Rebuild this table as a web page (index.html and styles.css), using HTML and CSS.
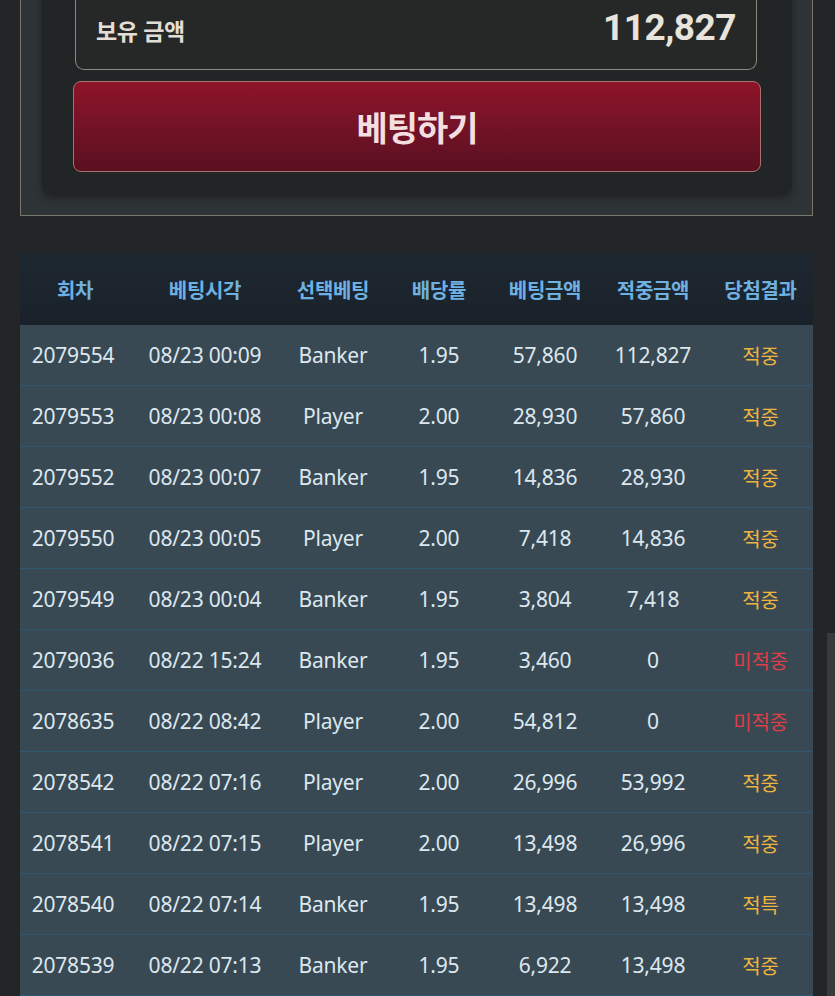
FILE: index.html
```html
<!DOCTYPE html>
<html lang="ko">
<head>
<meta charset="utf-8">
<link rel="stylesheet" href="styles.css">
</head>
<body>
<div class="page">
  <section class="panel">
    <div class="card">
      <div class="balance">
        <span class="balance-label">보유 금액</span>
        <span class="balance-value">112,827</span>
      </div>
      <button class="bet-btn">베팅하기</button>
    </div>
  </section>

  <table class="history">
    <colgroup>
      <col class="c1"><col class="c2"><col class="c3"><col class="c4"><col class="c5"><col class="c6"><col class="c7">
    </colgroup>
    <thead>
      <tr><th>회차</th><th>베팅시각</th><th>선택베팅</th><th>배당률</th><th>베팅금액</th><th>적중금액</th><th>당첨결과</th></tr>
    </thead>
    <tbody>
      <tr><td>2079554</td><td>08/23 00:09</td><td>Banker</td><td>1.95</td><td>57,860</td><td>112,827</td><td class="win">적중</td></tr>
      <tr><td>2079553</td><td>08/23 00:08</td><td>Player</td><td>2.00</td><td>28,930</td><td>57,860</td><td class="win">적중</td></tr>
      <tr><td>2079552</td><td>08/23 00:07</td><td>Banker</td><td>1.95</td><td>14,836</td><td>28,930</td><td class="win">적중</td></tr>
      <tr><td>2079550</td><td>08/23 00:05</td><td>Player</td><td>2.00</td><td>7,418</td><td>14,836</td><td class="win">적중</td></tr>
      <tr><td>2079549</td><td>08/23 00:04</td><td>Banker</td><td>1.95</td><td>3,804</td><td>7,418</td><td class="win">적중</td></tr>
      <tr><td>2079036</td><td>08/22 15:24</td><td>Banker</td><td>1.95</td><td>3,460</td><td>0</td><td class="lose">미적중</td></tr>
      <tr><td>2078635</td><td>08/22 08:42</td><td>Player</td><td>2.00</td><td>54,812</td><td>0</td><td class="lose">미적중</td></tr>
      <tr><td>2078542</td><td>08/22 07:16</td><td>Player</td><td>2.00</td><td>26,996</td><td>53,992</td><td class="win">적중</td></tr>
      <tr><td>2078541</td><td>08/22 07:15</td><td>Player</td><td>2.00</td><td>13,498</td><td>26,996</td><td class="win">적중</td></tr>
      <tr><td>2078540</td><td>08/22 07:14</td><td>Banker</td><td>1.95</td><td>13,498</td><td>13,498</td><td class="win">적특</td></tr>
      <tr><td>2078539</td><td>08/22 07:13</td><td>Banker</td><td>1.95</td><td>6,922</td><td>13,498</td><td class="win">적중</td></tr>
    </tbody>
  </table>
</div>
<div class="scroll-thumb"></div>
</body>
</html>
```

FILE: styles.css
```css
html, body {
  margin: 0;
  padding: 0;
  background: #232526;
  overflow: hidden;
  height: 996px;
}

.page {
  margin-top: -30px;
  padding-left: 20px;
  width: 793px;
  font-family: "Noto Sans", "Noto Sans CJK KR", sans-serif;
}

.panel {
  background: #2e3335;
  border: 1px solid #7a776f;
  border-top: none;
  padding: 0 20px 20px 21px;
}

.card {
  background: #222526;
  border-radius: 0 0 10px 10px;
  box-shadow: 0 3px 8px rgba(0, 0, 0, 0.35);
  padding: 0 31px 23px 31px;
}

.balance {
  margin: 0 4px 0 2px;
  box-sizing: border-box;
  height: 100px;
  border: 1px solid #8b8880;
  border-top: none;
  border-radius: 0 0 9px 9px;
  background: #262828;
  display: flex;
  align-items: center;
  justify-content: space-between;
  padding: 0 20px;
}

.balance-label {
  font-family: "Noto Sans CJK KR", sans-serif;
  font-weight: 700;
  font-size: 23px;
  color: #e2ded6;
  letter-spacing: -0.5px;
  margin-top: 20px;
}

.balance-value {
  font-family: Roboto, "Noto Sans", sans-serif;
  font-weight: 700;
  font-size: 37px;
  color: #e8e4dc;
  margin-top: 16px;
  letter-spacing: -0.5px;
}

.bet-btn {
  display: block;
  width: 100%;
  margin-top: 11px;
  height: 91px;
  border: 1px solid #a9706f;
  border-radius: 8px;
  background: linear-gradient(180deg, #8e1429 0%, #741227 50%, #5a1020 100%);
  color: #f3dfe0;
  font-family: "Noto Sans CJK KR", sans-serif;
  font-weight: 700;
  font-size: 34px;
  letter-spacing: -1px;
  cursor: pointer;
}

.history {
  margin-top: 37px;
  width: 793px;
  border-collapse: collapse;
  table-layout: fixed;
}

.c1 { width: 110px; }
.c2 { width: 150px; }
.c3 { width: 106px; }
.c4 { width: 106px; }
.c5 { width: 106px; }
.c6 { width: 110px; }
.c7 { width: 105px; }

.history thead tr {
  background: linear-gradient(180deg, #1e2830 0%, #1a212a 100%);
}

.history th {
  height: 72px;
  padding: 0;
  font-family: "Noto Sans CJK KR", sans-serif;
  font-weight: 700;
  font-size: 20px;
  color: #6eb1e1;
  text-align: center;
  letter-spacing: -0.3px;
}

.history tbody tr {
  background: #384954;
  border-bottom: 1px solid #2e5870;
}

.history td {
  height: 60px;
  padding: 0;
  text-align: center;
  font-size: 21px;
  color: #dde7ee;
  white-space: nowrap;
  letter-spacing: -0.2px;
}

.history td:first-child {
  padding-right: 4px;
}

.history td.win {
  color: #eeb43e;
  font-family: "Noto Sans CJK KR", sans-serif;
  font-size: 20px;
}

.history td.lose {
  color: #dd3f46;
  font-family: "Noto Sans CJK KR", sans-serif;
  font-size: 20px;
}

.scroll-thumb {
  position: absolute;
  left: 827px;
  top: 633px;
  width: 8px;
  height: 363px;
  background: #3a3a3a;
}
```
